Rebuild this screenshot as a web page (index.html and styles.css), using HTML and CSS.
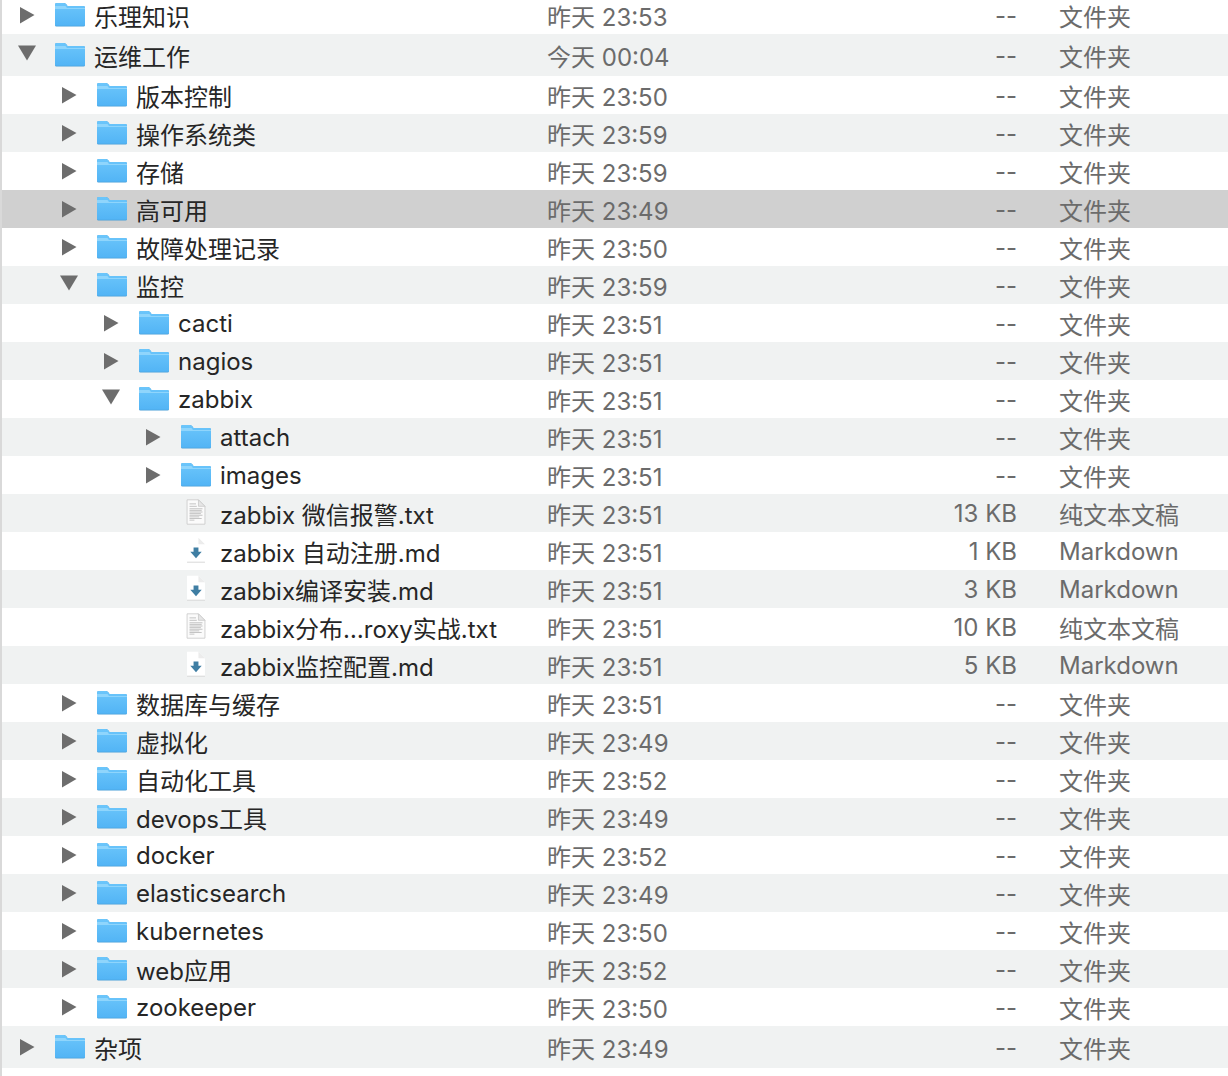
FILE: index.html
```html
<!DOCTYPE html>
<html lang="zh-CN">
<head>
  <meta charset="UTF-8">
  <title>Finder</title>
  <link rel="stylesheet" href="styles.css">
</head>
<body>
  <svg class="defs" width="0" height="0">
    <defs>
      <linearGradient id="folderBody" x1="0" y1="0" x2="0" y2="1">
        <stop offset="0" stop-color="#6cc6fb"/>
        <stop offset="1" stop-color="#52b4f5"/>
      </linearGradient>
      <symbol id="closed" viewBox="0 0 16 18"><path d="M1 1 L15.5 9 L1 17.5 Z" fill="#6d6d6d"/></symbol>
      <symbol id="open" viewBox="0 0 20 16"><path d="M1 0.5 H19 L10 15.5 Z" fill="#6d6d6d"/></symbol>
      <symbol id="folder" viewBox="0 0 32 26">
        <path d="M1 3.5 Q1 2 2.5 2 H10 Q11.500 2 12.500 3.500 L13.500 5 H29.500 Q31 5 31 6.500 V24 Q31 25.500 29.500 25.500 H2.500 Q1 25.500 1 24 Z" fill="#4a9fd8"/>
        <path d="M1 3.500 Q1 2 2.500 2 H10 Q11.500 2 12.500 3.500 L13.500 5 H29.500 Q31 5 31 6.500 V24 Q31 24.800 29.500 24.800 H2.500 Q1 24.800 1 24 Z" fill="url(#folderBody)"/>
        <path d="M1 8 H31 V7 H13 L11.500 5 H1 Z" fill="#8fd5fc"/>
      </symbol>
      <symbol id="doc-text" viewBox="0 0 24 32">
        <path d="M1 1 H15 L23 9 V31 H1 Z" fill="#fbfbfb" stroke="#c9c9c9"/>
        <path d="M15 1 V9 H23 Z" fill="#e6e6e6" stroke="#c9c9c9"/>
        <path d="M4 6 H12 M4 9 H13 M4 12 H20 M4 14 H19 M4 16 H20 M4 18 H18 M4 20 H20 M4 22 H16 M4 24 H19 M4 26 H10" stroke="#a5a5a5" stroke-width="0.8"/>
      </symbol>
      <symbol id="doc-md" viewBox="0 0 24 32">
        <path d="M1 1 H15 L23 9 V31 H1" fill="#ffffff"/>
        <path d="M1 31 H23" stroke="#cfcfcf"/>
        <path d="M15 1 L23 9 H15 Z" fill="#ececec"/>
        <path d="M9 13 H15 V18 H19 L12 26 L5 18 H9 Z" fill="#3f7ea3"/>
      </symbol>
    </defs>
  </svg>

  <div class="file-list">
    <div class="row"><div class="name lv0"><svg class="arrow"><use href="#closed"/></svg><svg class="icon"><use href="#folder"/></svg>乐理知识</div><div class="cell">昨天 23:53</div><div class="cell size">--</div><div class="cell">文件夹</div></div>
    <div class="row alt top"><div class="name lv0"><svg class="arrow down"><use href="#open"/></svg><svg class="icon"><use href="#folder"/></svg>运维工作</div><div class="cell">今天 00:04</div><div class="cell size">--</div><div class="cell">文件夹</div></div>
    <div class="row"><div class="name lv1"><svg class="arrow"><use href="#closed"/></svg><svg class="icon"><use href="#folder"/></svg>版本控制</div><div class="cell">昨天 23:50</div><div class="cell size">--</div><div class="cell">文件夹</div></div>
    <div class="row alt"><div class="name lv1"><svg class="arrow"><use href="#closed"/></svg><svg class="icon"><use href="#folder"/></svg>操作系统类</div><div class="cell">昨天 23:59</div><div class="cell size">--</div><div class="cell">文件夹</div></div>
    <div class="row"><div class="name lv1"><svg class="arrow"><use href="#closed"/></svg><svg class="icon"><use href="#folder"/></svg>存储</div><div class="cell">昨天 23:59</div><div class="cell size">--</div><div class="cell">文件夹</div></div>
    <div class="row selected"><div class="name lv1"><svg class="arrow"><use href="#closed"/></svg><svg class="icon"><use href="#folder"/></svg>高可用</div><div class="cell">昨天 23:49</div><div class="cell size">--</div><div class="cell">文件夹</div></div>
    <div class="row"><div class="name lv1"><svg class="arrow"><use href="#closed"/></svg><svg class="icon"><use href="#folder"/></svg>故障处理记录</div><div class="cell">昨天 23:50</div><div class="cell size">--</div><div class="cell">文件夹</div></div>
    <div class="row alt"><div class="name lv1"><svg class="arrow down"><use href="#open"/></svg><svg class="icon"><use href="#folder"/></svg>监控</div><div class="cell">昨天 23:59</div><div class="cell size">--</div><div class="cell">文件夹</div></div>
    <div class="row"><div class="name lv2"><svg class="arrow"><use href="#closed"/></svg><svg class="icon"><use href="#folder"/></svg>cacti</div><div class="cell">昨天 23:51</div><div class="cell size">--</div><div class="cell">文件夹</div></div>
    <div class="row alt"><div class="name lv2"><svg class="arrow"><use href="#closed"/></svg><svg class="icon"><use href="#folder"/></svg>nagios</div><div class="cell">昨天 23:51</div><div class="cell size">--</div><div class="cell">文件夹</div></div>
    <div class="row"><div class="name lv2"><svg class="arrow down"><use href="#open"/></svg><svg class="icon"><use href="#folder"/></svg>zabbix</div><div class="cell">昨天 23:51</div><div class="cell size">--</div><div class="cell">文件夹</div></div>
    <div class="row alt"><div class="name lv3"><svg class="arrow"><use href="#closed"/></svg><svg class="icon"><use href="#folder"/></svg>attach</div><div class="cell">昨天 23:51</div><div class="cell size">--</div><div class="cell">文件夹</div></div>
    <div class="row"><div class="name lv3"><svg class="arrow"><use href="#closed"/></svg><svg class="icon"><use href="#folder"/></svg>images</div><div class="cell">昨天 23:51</div><div class="cell size">--</div><div class="cell">文件夹</div></div>
    <div class="row alt"><div class="name lv3"><span class="arrow"></span><svg class="icon"><use href="#doc-text"/></svg>zabbix 微信报警.txt</div><div class="cell">昨天 23:51</div><div class="cell size">13 KB</div><div class="cell">纯文本文稿</div></div>
    <div class="row"><div class="name lv3"><span class="arrow"></span><svg class="icon"><use href="#doc-md"/></svg>zabbix 自动注册.md</div><div class="cell">昨天 23:51</div><div class="cell size">1 KB</div><div class="cell">Markdown</div></div>
    <div class="row alt"><div class="name lv3"><span class="arrow"></span><svg class="icon"><use href="#doc-md"/></svg>zabbix编译安装.md</div><div class="cell">昨天 23:51</div><div class="cell size">3 KB</div><div class="cell">Markdown</div></div>
    <div class="row"><div class="name lv3"><span class="arrow"></span><svg class="icon"><use href="#doc-text"/></svg>zabbix分布…roxy实战.txt</div><div class="cell">昨天 23:51</div><div class="cell size">10 KB</div><div class="cell">纯文本文稿</div></div>
    <div class="row alt"><div class="name lv3"><span class="arrow"></span><svg class="icon"><use href="#doc-md"/></svg>zabbix监控配置.md</div><div class="cell">昨天 23:51</div><div class="cell size">5 KB</div><div class="cell">Markdown</div></div>
    <div class="row"><div class="name lv1"><svg class="arrow"><use href="#closed"/></svg><svg class="icon"><use href="#folder"/></svg>数据库与缓存</div><div class="cell">昨天 23:51</div><div class="cell size">--</div><div class="cell">文件夹</div></div>
    <div class="row alt"><div class="name lv1"><svg class="arrow"><use href="#closed"/></svg><svg class="icon"><use href="#folder"/></svg>虚拟化</div><div class="cell">昨天 23:49</div><div class="cell size">--</div><div class="cell">文件夹</div></div>
    <div class="row"><div class="name lv1"><svg class="arrow"><use href="#closed"/></svg><svg class="icon"><use href="#folder"/></svg>自动化工具</div><div class="cell">昨天 23:52</div><div class="cell size">--</div><div class="cell">文件夹</div></div>
    <div class="row alt"><div class="name lv1"><svg class="arrow"><use href="#closed"/></svg><svg class="icon"><use href="#folder"/></svg>devops工具</div><div class="cell">昨天 23:49</div><div class="cell size">--</div><div class="cell">文件夹</div></div>
    <div class="row"><div class="name lv1"><svg class="arrow"><use href="#closed"/></svg><svg class="icon"><use href="#folder"/></svg>docker</div><div class="cell">昨天 23:52</div><div class="cell size">--</div><div class="cell">文件夹</div></div>
    <div class="row alt"><div class="name lv1"><svg class="arrow"><use href="#closed"/></svg><svg class="icon"><use href="#folder"/></svg>elasticsearch</div><div class="cell">昨天 23:49</div><div class="cell size">--</div><div class="cell">文件夹</div></div>
    <div class="row"><div class="name lv1"><svg class="arrow"><use href="#closed"/></svg><svg class="icon"><use href="#folder"/></svg>kubernetes</div><div class="cell">昨天 23:50</div><div class="cell size">--</div><div class="cell">文件夹</div></div>
    <div class="row alt"><div class="name lv1"><svg class="arrow"><use href="#closed"/></svg><svg class="icon"><use href="#folder"/></svg>web应用</div><div class="cell">昨天 23:52</div><div class="cell size">--</div><div class="cell">文件夹</div></div>
    <div class="row"><div class="name lv1"><svg class="arrow"><use href="#closed"/></svg><svg class="icon"><use href="#folder"/></svg>zookeeper</div><div class="cell">昨天 23:50</div><div class="cell size">--</div><div class="cell">文件夹</div></div>
    <div class="row alt top"><div class="name lv0"><svg class="arrow"><use href="#closed"/></svg><svg class="icon"><use href="#folder"/></svg>杂项</div><div class="cell">昨天 23:49</div><div class="cell size">--</div><div class="cell">文件夹</div></div>
  </div>
</body>
</html>
```

FILE: styles.css
```css
/* PAGE */
* {
  box-sizing: border-box;
}

html, body {
  margin: 0;
  height: 100%;
  overflow: hidden;
  background: #fff;
}

body {
  font-family: Inter, "Noto Sans CJK SC", sans-serif;
  font-size: 24px;
  color: #262626;
  border-left: 2px solid #d9d9d9;
}

.defs {
  display: block;
  height: 0;
}

/* LIST */
.file-list {
  margin-top: -4px;
}

.row {
  display: grid;
  grid-template-columns: 545px 200px 270px 1fr;
  column-gap: 0;
  align-items: center;
  height: 38px;
}

.row.top {
  height: 42px;
}

.row.alt {
  background: #f0f2f2;
}

.row.selected {
  background: #d0d0d0;
}

/* NAME COLUMN */
.name {
  display: flex;
  align-items: center;
  white-space: nowrap;
}

.lv0 { padding-left: 17px; }
.lv1 { padding-left: 59px; }
.lv2 { padding-left: 101px; }
.lv3 { padding-left: 143px; }

.arrow {
  flex: none;
  width: 16px;
  height: 18px;
  margin-right: 19px;
}

.arrow.down {
  width: 20px;
  height: 16px;
  margin-left: -2px;
  margin-right: 17px;
  position: relative;
  top: -2px;
}

.icon {
  flex: none;
  width: 32px;
  height: 26px;
  margin-right: 8px;
  position: relative;
  top: -1px;
}

.name svg[class="icon"] use[href^="#doc"] {
  color: inherit;
}

/* OTHER COLUMNS */
.cell {
  color: #6b6b6b;
}

.size {
  text-align: right;
  padding-right: 0;
}

.row > .cell:last-child {
  padding-left: 42px;
}
```
